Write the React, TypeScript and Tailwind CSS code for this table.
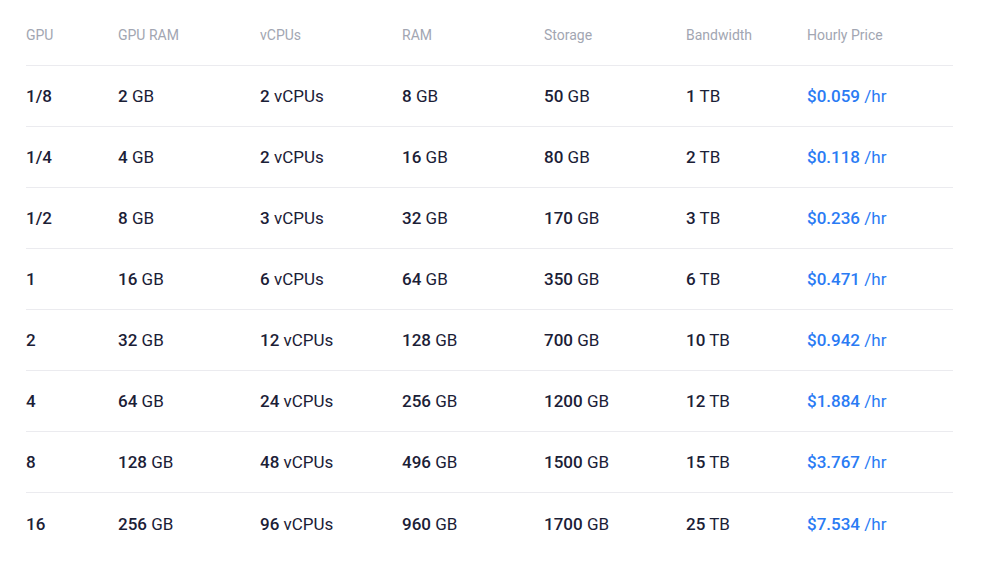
const rows = [
  ["1/8", "2", "2", "8", "50", "1", "$0.059"],
  ["1/4", "4", "2", "16", "80", "2", "$0.118"],
  ["1/2", "8", "3", "32", "170", "3", "$0.236"],
  ["1", "16", "6", "64", "350", "6", "$0.471"],
  ["2", "32", "12", "128", "700", "10", "$0.942"],
  ["4", "64", "24", "256", "1200", "12", "$1.884"],
  ["8", "128", "48", "496", "1500", "15", "$3.767"],
  ["16", "256", "96", "960", "1700", "25", "$7.534"],
];

const headers = ["GPU", "GPU RAM", "vCPUs", "RAM", "Storage", "Bandwidth", "Hourly Price"];

const cols = "grid grid-cols-[92px_142px_142px_142px_142px_121px_1fr]";

function Val({ n, unit }: { n: string; unit: string }) {
  return (
    <span>
      <span className="font-medium">{n}</span> {unit}
    </span>
  );
}

export default function App() {
  return (
    <div className="min-h-[567px] bg-white font-['Roboto',sans-serif] pl-[26px] pr-[28px]">
      <div className={`${cols} border-b border-[#ebebef] pt-[24px] pb-[19px] text-[14px] leading-[22px] text-[#a2a6b2]`}>
        {headers.map((h) => (
          <div key={h}>{h}</div>
        ))}
      </div>
      {rows.map((r, i) => (
        <div
          key={r[0]}
          className={`${cols} h-[61px] items-center text-[17px] leading-6 text-[#1b2036] ${
            i < rows.length - 1 ? "border-b border-[#ebebef]" : ""
          }`}
        >
          <div className="font-medium">{r[0]}</div>
          <Val n={r[1]} unit="GB" />
          <Val n={r[2]} unit="vCPUs" />
          <Val n={r[3]} unit="GB" />
          <Val n={r[4]} unit="GB" />
          <Val n={r[5]} unit="TB" />
          <div className="text-[#2a7bf4]">
            <span className="font-medium">{r[6]}</span> /hr
          </div>
        </div>
      ))}
    </div>
  );
}
